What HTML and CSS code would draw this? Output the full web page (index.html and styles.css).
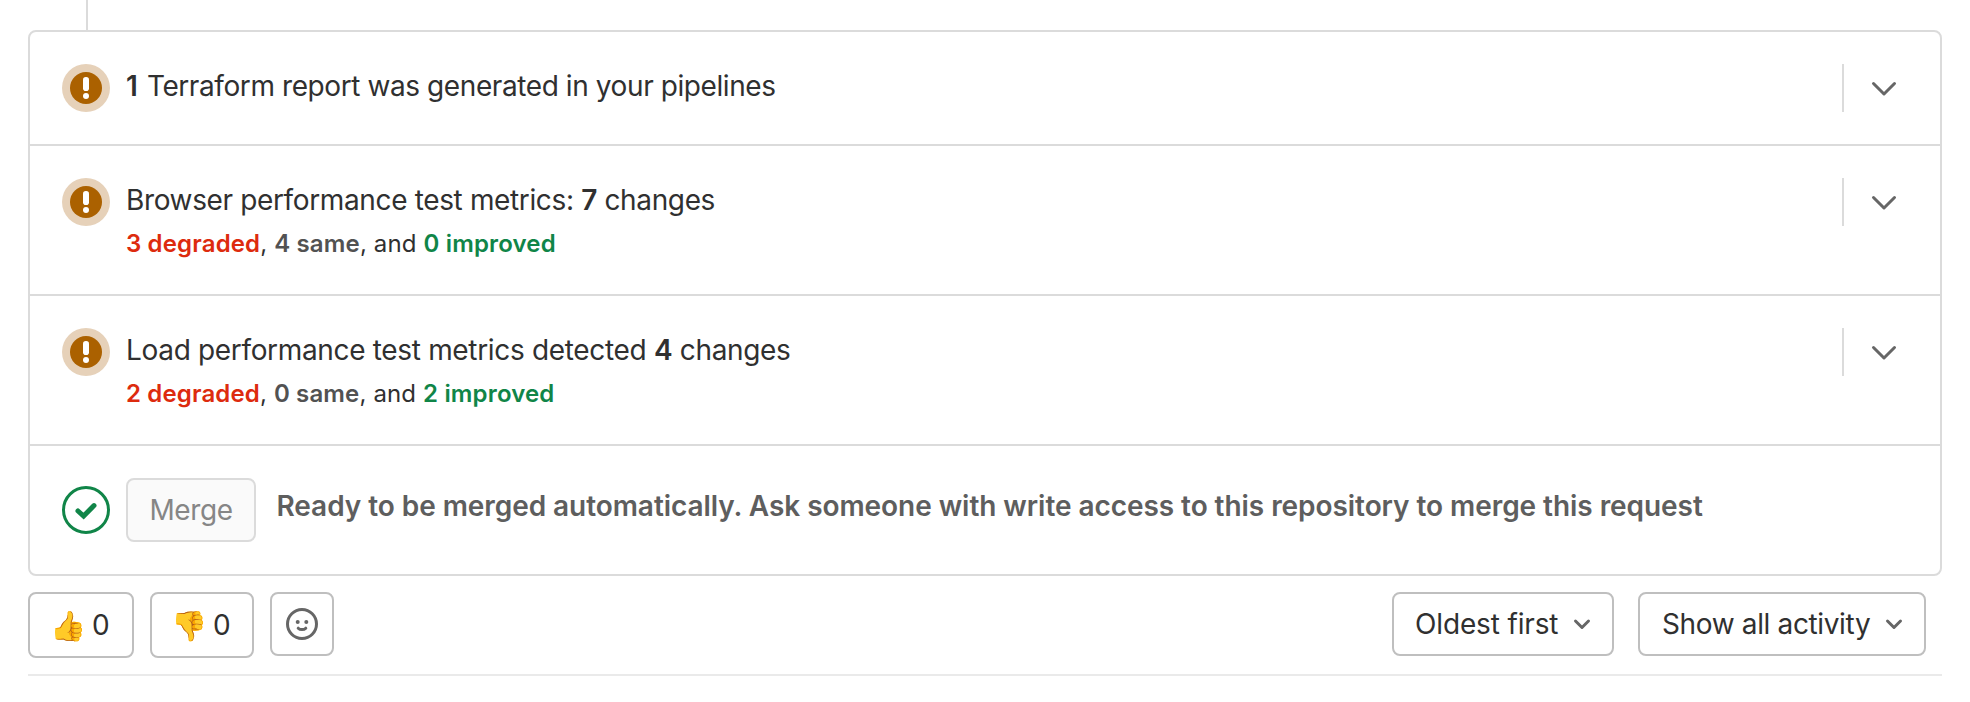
FILE: index.html
```
<!DOCTYPE html>
<html lang="en">
<head>
<meta charset="utf-8">
<title>Merge request</title>
<link rel="stylesheet" href="styles.css">
</head>
<body>
<svg class="sprite" aria-hidden="true">
  <symbol id="warning" viewBox="0 0 48 48">
    <circle cx="24" cy="24" r="24" fill="#e6d1b9"/>
    <circle cx="24" cy="24" r="16" fill="#ab6100"/>
    <rect x="21" y="13" width="6" height="14" rx="2.8" fill="#fff"/>
    <circle cx="24" cy="32" r="3" fill="#fff"/>
  </symbol>
  <symbol id="chevron-lg" viewBox="0 0 32 32">
    <path d="M5.5 11.5 16 22 26.5 11.5" fill="none" stroke="#666" stroke-width="3" stroke-linecap="round" stroke-linejoin="round"/>
  </symbol>
  <symbol id="chevron" viewBox="0 0 24 24">
    <path d="M5.5 9 12 15.5 18.5 9" fill="none" stroke="#666" stroke-width="3" stroke-linecap="round" stroke-linejoin="round"/>
  </symbol>
</svg>
<main class="page">
  <div class="connector"></div>
  <section class="widget">
    <div class="row row-short">
      <svg class="status"><use href="#warning"/></svg>
      <div class="body">
        <p class="title title-report"><b class="lead">1</b> Terraform report was generated in your pipelines</p>
      </div>
      <div class="toggle"><svg class="chevron-lg"><use href="#chevron-lg"/></svg></div>
    </div>
    <div class="row row-tall">
      <svg class="status"><use href="#warning"/></svg>
      <div class="body">
        <p class="title">Browser performance test metrics: <b>7</b> changes</p>
        <p class="summary"><b class="bad">3 degraded</b>, <b class="same">4 same</b>, and <b class="good">0 improved</b></p>
      </div>
      <div class="toggle"><svg class="chevron-lg"><use href="#chevron-lg"/></svg></div>
    </div>
    <div class="row row-tall">
      <svg class="status"><use href="#warning"/></svg>
      <div class="body">
        <p class="title title-load">Load performance test metrics detected <b>4</b> changes</p>
        <p class="summary"><b class="bad">2 degraded</b>, <b class="same">0 same</b>, and <b class="good">2 improved</b></p>
      </div>
      <div class="toggle"><svg class="chevron-lg"><use href="#chevron-lg"/></svg></div>
    </div>
    <div class="row row-merge">
      <svg class="status status-merge" viewBox="0 0 48 48">
        <circle cx="24" cy="24" r="22.5" fill="none" stroke="#108548" stroke-width="3"/>
        <path d="M16 25 21.6 30 32 19.6" fill="none" stroke="#108548" stroke-width="5" stroke-linecap="round" stroke-linejoin="miter"/>
      </svg>
      <button class="btn btn-merge" disabled>Merge</button>
      <p class="ready">Ready to be merged automatically. Ask someone with write access to this repository to merge this request</p>
    </div>
  </section>
  <div class="actions">
    <button class="btn award award-up"><span class="emoji">👍</span><span>0</span></button>
    <button class="btn award award-down"><span class="emoji">👎</span><span>0</span></button>
    <button class="btn react" aria-label="Add reaction">
      <svg class="smiley" viewBox="0 0 32 32">
        <circle cx="16" cy="16" r="14.5" fill="none" stroke="#666" stroke-width="3"/>
        <circle cx="11.7" cy="14" r="2" fill="#666"/>
        <circle cx="20.3" cy="14" r="2" fill="#666"/>
        <path d="M12.2 20.2Q13.6 21.6 16 21.6Q18.4 21.6 19.8 20.2" fill="none" stroke="#666" stroke-width="3" stroke-linecap="round"/>
      </svg>
    </button>
    <button class="btn select select-sort"><span>Oldest first</span><svg class="chevron"><use href="#chevron"/></svg></button>
    <button class="btn select select-filter"><span>Show all activity</span><svg class="chevron"><use href="#chevron"/></svg></button>
  </div>
</main>
</body>
</html>
```

FILE: styles.css
```
* { box-sizing: border-box; }
body {
  margin: 0;
  background: #fff;
  color: #303030;
  font: 28px/40px Inter, "Liberation Sans", sans-serif;
}
p { margin: 0; }
b { font-weight: 600; }
.sprite { display: none; }
.page { padding: 0 28px; }
.connector {
  width: 2px;
  height: 30px;
  margin-left: 58px;
  background: #dbdbdb;
}
.widget {
  width: 1914px;
  border: 2px solid #dbdbdb;
  border-radius: 8px;
}
.row {
  display: flex;
  align-items: flex-start;
  padding: 32px 30px 0 32px;
}
.row + .row { border-top: 2px solid #dbdbdb; }
.row-short { height: 112px; }
.row-tall { height: 150px; }
.row-merge { height: 130px; }
.status {
  flex: none;
  width: 48px;
  height: 48px;
}
.status-merge { margin-top: 8px; }
.body { flex: 1; padding: 2px 0 0 16px; }
.title {
  letter-spacing: -0.36px;
  white-space: nowrap;
}
.title-report { letter-spacing: -0.41px; }
.title-load { letter-spacing: -0.33px; }
.lead { margin-right: 2px; }
.summary {
  margin-top: 8px;
  font-size: 24px;
  line-height: 32px;
  letter-spacing: 0.15px;
}
.bad { color: #dd2b0e; }
.same { color: #525252; }
.good { color: #108548; }
.toggle {
  display: flex;
  align-items: center;
  width: 68px;
  height: 48px;
  padding-left: 24px;
  border-left: 2px solid #dbdbdb;
}
.chevron-lg { width: 32px; height: 32px; }
.btn {
  display: flex;
  align-items: center;
  justify-content: center;
  height: 64px;
  padding: 0;
  border: 2px solid #bfbfbf;
  border-radius: 8px;
  background: #fff;
  color: #303030;
  font: inherit;
}
.btn-merge {
  width: 130px;
  margin-left: 16px;
  border-color: #dbdbdb;
  background: #fafafa;
  color: #868686;
  letter-spacing: -0.4px;
}
.ready {
  padding: 8px 0 0 20.5px;
  color: #5e5e5e;
  font-weight: 600;
  letter-spacing: -0.06px;
  white-space: nowrap;
}
.actions {
  display: flex;
  align-items: flex-start;
  width: 1914px;
  height: 100px;
  padding: 16px 16px 0 0;
  border-bottom: 2px solid #eaeaea;
}
.award {
  justify-content: flex-start;
  height: 66px;
  padding-left: 20px;
}
.emoji {
  flex: none;
  width: 42px;
  padding-top: 2px;
  font-family: "Noto Color Emoji", sans-serif;
  font-size: 29px;
  text-align: left;
}
.award-up { width: 106px; }
.award-down { width: 104px; margin-left: 16px; padding-left: 19px; }
.react { width: 64px; margin-left: 16px; }
.smiley { width: 32px; height: 32px; }
.select {
  justify-content: space-between;
  padding: 0 18px 0 21px;
}
.select-sort { width: 222px; margin-left: auto; letter-spacing: -0.15px; }
.select-filter {
  width: 288px;
  margin-left: 24px;
  padding-left: 22px;
  letter-spacing: -0.36px;
}
.chevron { width: 24px; height: 24px; }
```
